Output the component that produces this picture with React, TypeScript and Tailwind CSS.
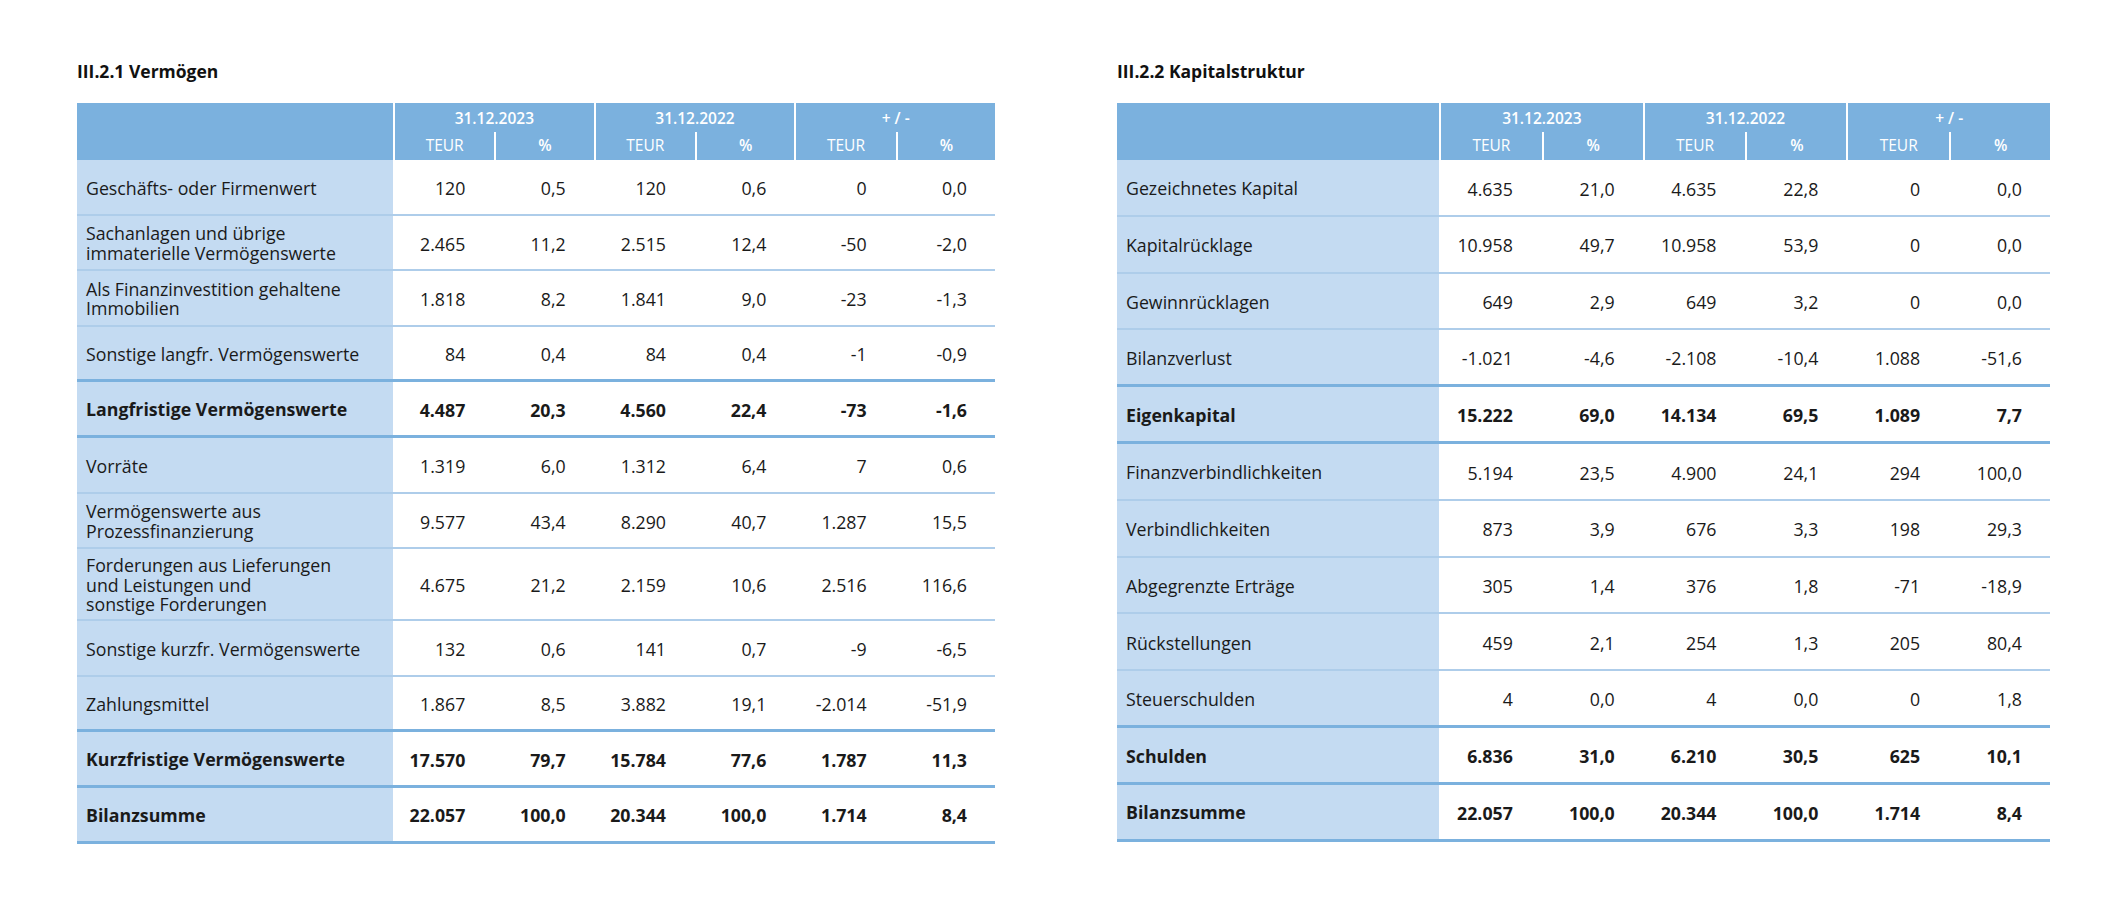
import clsx from "clsx";

const cn = clsx;

type Row = {
  label: string[];
  values: string[];
  bold?: boolean;
  thick?: boolean;
  tall?: boolean;
};

const assets: Row[] = [
  { label: ["Geschäfts- oder Firmenwert"], values: ["120", "0,5", "120", "0,6", "0", "0,0"] },
  { label: ["Sachanlagen und übrige", "immaterielle Vermögenswerte"], values: ["2.465", "11,2", "2.515", "12,4", "-50", "-2,0"] },
  { label: ["Als Finanzinvestition gehaltene", "Immobilien"], values: ["1.818", "8,2", "1.841", "9,0", "-23", "-1,3"] },
  { label: ["Sonstige langfr. Vermögenswerte"], values: ["84", "0,4", "84", "0,4", "-1", "-0,9"], thick: true },
  { label: ["Langfristige Vermögenswerte"], values: ["4.487", "20,3", "4.560", "22,4", "-73", "-1,6"], bold: true, thick: true },
  { label: ["Vorräte"], values: ["1.319", "6,0", "1.312", "6,4", "7", "0,6"] },
  { label: ["Vermögenswerte aus", "Prozessfinanzierung"], values: ["9.577", "43,4", "8.290", "40,7", "1.287", "15,5"] },
  { label: ["Forderungen aus Lieferungen", "und Leistungen und", "sonstige Forderungen"], values: ["4.675", "21,2", "2.159", "10,6", "2.516", "116,6"], tall: true },
  { label: ["Sonstige kurzfr. Vermögenswerte"], values: ["132", "0,6", "141", "0,7", "-9", "-6,5"] },
  { label: ["Zahlungsmittel"], values: ["1.867", "8,5", "3.882", "19,1", "-2.014", "-51,9"], thick: true },
  { label: ["Kurzfristige Vermögenswerte"], values: ["17.570", "79,7", "15.784", "77,6", "1.787", "11,3"], bold: true, thick: true },
  { label: ["Bilanzsumme"], values: ["22.057", "100,0", "20.344", "100,0", "1.714", "8,4"], bold: true, thick: true },
];

const capital: Row[] = [
  { label: ["Gezeichnetes Kapital"], values: ["4.635", "21,0", "4.635", "22,8", "0", "0,0"] },
  { label: ["Kapitalrücklage"], values: ["10.958", "49,7", "10.958", "53,9", "0", "0,0"] },
  { label: ["Gewinnrücklagen"], values: ["649", "2,9", "649", "3,2", "0", "0,0"] },
  { label: ["Bilanzverlust"], values: ["-1.021", "-4,6", "-2.108", "-10,4", "1.088", "-51,6"], thick: true },
  { label: ["Eigenkapital"], values: ["15.222", "69,0", "14.134", "69,5", "1.089", "7,7"], bold: true, thick: true },
  { label: ["Finanzverbindlichkeiten"], values: ["5.194", "23,5", "4.900", "24,1", "294", "100,0"] },
  { label: ["Verbindlichkeiten"], values: ["873", "3,9", "676", "3,3", "198", "29,3"] },
  { label: ["Abgegrenzte Erträge"], values: ["305", "1,4", "376", "1,8", "-71", "-18,9"] },
  { label: ["Rückstellungen"], values: ["459", "2,1", "254", "1,3", "205", "80,4"] },
  { label: ["Steuerschulden"], values: ["4", "0,0", "4", "0,0", "0", "1,8"], thick: true },
  { label: ["Schulden"], values: ["6.836", "31,0", "6.210", "30,5", "625", "10,1"], bold: true, thick: true },
  { label: ["Bilanzsumme"], values: ["22.057", "100,0", "20.344", "100,0", "1.714", "8,4"], bold: true, thick: true },
];

const groups = ["31.12.2023", "31.12.2022", "+ / -"];

function Header({ cols }: { cols: string }) {
  return (
    <div className={cn("grid bg-[#7bb1de] text-white", cols)}>
      <div className="h-[57px]" />
      {groups.map((g) => (
        <div key={g} className="col-span-2 flex flex-col border-l-2 border-white">
          <div className="flex h-[29px] items-center justify-center pt-[2px] text-[15.5px] font-semibold">{g}</div>
          <div className="grid h-[28px] grid-cols-2 text-[15.5px] font-medium">
            <div className="flex items-center justify-center">TEUR</div>
            <div className="flex items-center justify-center border-l-2 border-white font-semibold">%</div>
          </div>
        </div>
      ))}
    </div>
  );
}

function BalanceTable({
  title,
  rows,
  cols,
  width,
  rowH,
}: {
  title: string;
  rows: Row[];
  cols: string;
  width: string;
  rowH: string;
}) {
  return (
    <section className={width}>
      <h2 className="mt-[2px] mb-[22px] h-[19px] text-[17.5px] leading-[19px] font-bold text-[#111]">{title}</h2>
      <Header cols={cols} />
      {rows.map((r, i) => (
        <div
          key={i}
          className={cn(
            "grid",
            cols,
            r.tall ? "h-[72px]" : rowH,
            r.thick ? "border-b-[3px] border-[#7bb1de]" : "border-b-2 border-[#aecdea]",
            r.bold ? "font-bold" : "font-normal"
          )}
        >
          <div className="flex flex-col justify-center bg-[#c4dbf2] pt-[3px] pl-[9px] text-[17.75px] leading-[19.5px] text-[#1a1a1a]">
            {r.label.map((l) => (
              <span key={l}>{l}</span>
            ))}
          </div>
          {r.values.map((v, j) => (
            <div key={j} className="flex items-center justify-end pt-[3px] pr-[28px] text-[17.75px] text-[#1a1a1a]">
              {v}
            </div>
          ))}
        </div>
      ))}
    </section>
  );
}

export default function App() {
  return (
    <div className="flex h-[902px] w-[2120px] gap-[122px] bg-white pt-[60px] pl-[77px] font-['Open_Sans',sans-serif]">
      <BalanceTable
        title="III.2.1 Vermögen"
        rows={assets}
        cols="grid-cols-[316px_repeat(6,minmax(0,1fr))]"
        width="w-[918px]"
        rowH="h-[55.6px]"
      />
      <BalanceTable
        title="III.2.2 Kapitalstruktur"
        rows={capital}
        cols="grid-cols-[322px_repeat(6,minmax(0,1fr))]"
        width="w-[933px]"
        rowH="h-[56.8px]"
      />
    </div>
  );
}
